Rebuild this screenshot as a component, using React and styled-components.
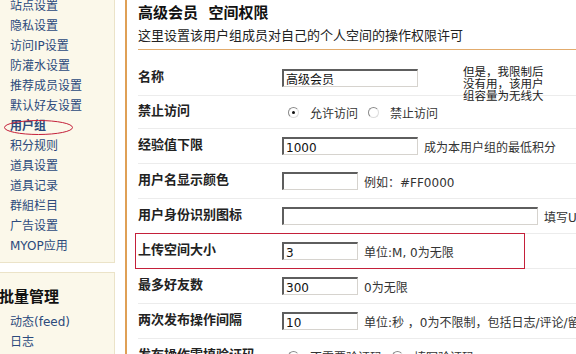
import styled, { createGlobalStyle } from "styled-components";

const GlobalStyle = createGlobalStyle`
  body {
    margin: 0;
    background: #fff;
    overflow: hidden;
  }
  * {
    box-sizing: border-box;
  }
`;

const Page = styled.div`
  display: flex;
  width: 576px;
  height: 354px;
  overflow: hidden;
  font-family: "DejaVu Sans", "Noto Sans CJK SC", sans-serif;
  font-size: 12px;
  color: #333;
`;

const Sidebar = styled.aside`
  flex: none;
  width: 125px;
  margin-left: -10px;
  margin-right: 10px;
  display: flex;
  flex-direction: column;
  gap: 9px;
`;

const MenuBox = styled.div`
  background: #fbf8ea;
  border: 1px solid #ebe3c8;
  margin-top: ${({ $top }) => $top || 0};
  padding: ${({ $pad }) => $pad};
`;

const MenuTitle = styled.h3`
  margin: 0 0 5px;
  padding-left: 8px;
  font-size: 15px;
  line-height: 20px;
  font-weight: bold;
  color: #111;
`;

const MenuList = styled.ul`
  list-style: none;
  margin: 0;
  padding: 0 0 0 19px;
`;

const MenuItem = styled.li`
  position: relative;
  line-height: 20px;
  height: 20px;
  color: #2c4a7c;
  font-weight: ${({ $active }) => ($active ? "bold" : "normal")};
  white-space: nowrap;
`;

const Ellipse = styled.svg`
  position: absolute;
  left: -6px;
  top: 4px;
  overflow: visible;
`;

const Main = styled.main`
  flex: none;
  width: 480px;
  border-left: 2px solid #dfa056;
  padding-left: 11px;
`;

const Header = styled.div`
  padding: 3px 0 5px;
  border-bottom: 1px solid #e2ab6c;
`;

const Title = styled.h2`
  margin: 0;
  font-size: 15px;
  line-height: 20px;
  font-weight: bold;
  color: #111;
  white-space: pre;
`;

const Subtitle = styled.p`
  margin: 5px 0 0;
  font-size: 13px;
  line-height: 16px;
  color: #222;
`;

const Form = styled.div`
  margin-top: 11px;
`;

const Row = styled.div`
  position: relative;
  display: grid;
  grid-template-columns: 144px auto;
  align-items: center;
  height: ${({ $h }) => $h || 35}px;
  border-bottom: 1px solid #ececec;
`;

const Label = styled.div`
  padding-bottom: 5px;
  font-size: 13px;
  font-weight: bold;
  color: #222;
  white-space: nowrap;
`;

const Field = styled.div`
  display: flex;
  align-items: center;
  gap: 6px;
  white-space: nowrap;
`;

const Input = styled.div`
  width: ${({ $w }) => $w}px;
  height: 18px;
  padding: 3px 0 0 2px;
  border-top: 2px solid #5e5e5e;
  border-left: 2px solid #5e5e5e;
  border-right: 1px solid #d6d3ce;
  border-bottom: 1px solid #d6d3ce;
  background: #fff;
  font-size: 12px;
  line-height: 13px;
  color: #111;
`;

const Hint = styled.span`
  font-size: 12px;
  color: #333;
`;

const Radios = styled.div`
  display: flex;
  align-items: center;
  gap: 10px;
  margin-left: 6px;
  white-space: nowrap;
`;

const RadioOption = styled.label`
  display: flex;
  align-items: center;
  gap: 11px;
  font-size: 12px;
  color: #333;
`;

const RadioDot = styled.span`
  position: relative;
  width: 11px;
  height: 11px;
  border-radius: 50%;
  border: 1px solid;
  border-color: #8a8a8a #dcdcdc #dcdcdc #8a8a8a;
  background: #fff;

  &::after {
    content: "";
    display: ${({ $checked }) => ($checked ? "block" : "none")};
    position: absolute;
    left: 3px;
    top: 3px;
    width: 3px;
    height: 3px;
    border-radius: 50%;
    background: #111;
  }
`;

const Note = styled.div`
  position: absolute;
  left: 325px;
  top: 4px;
  font-family: "Noto Sans CJK SC", sans-serif;
  font-size: 11.5px;
  line-height: 12px;
  color: #222;
`;

const Highlight = styled.div`
  position: absolute;
  left: -3px;
  top: -1px;
  width: 390px;
  height: 36px;
  border: 1px solid #c4203a;
  pointer-events: none;
`;

const menu = [
  "站点设置",
  "隐私设置",
  "访问IP设置",
  "防灌水设置",
  "推荐成员设置",
  "默认好友设置",
  "用户组",
  "积分规则",
  "道具设置",
  "道具记录",
  "群組栏目",
  "广告设置",
  "MYOP应用",
];

const Radio = ({ checked, children }) => (
  <RadioOption>
    <RadioDot $checked={checked} />
    {children}
  </RadioOption>
);

const App = () => (
  <>
    <GlobalStyle />
    <Page>
      <Sidebar>
        <MenuBox $top="-10px" $pad="5px 0 6px">
          <MenuList>
            {menu.map((item) => (
              <MenuItem key={item} $active={item === "用户组"}>
                {item}
                {item === "用户组" && (
                  <Ellipse width="69" height="15" viewBox="0 0 69 15">
                    <ellipse cx="34.5" cy="7.5" rx="34" ry="7" fill="none" stroke="#c4203a" strokeWidth="1" />
                  </Ellipse>
                )}
              </MenuItem>
            ))}
          </MenuList>
        </MenuBox>
        <MenuBox $pad="14px 0 10px">
          <MenuTitle>批量管理</MenuTitle>
          <MenuList>
            <MenuItem>动态(feed)</MenuItem>
            <MenuItem>日志</MenuItem>
          </MenuList>
        </MenuBox>
      </Sidebar>

      <Main>
        <Header>
          <Title>高级会员  空间权限</Title>
          <Subtitle>这里设置该用户组成员对自己的个人空间的操作权限许可</Subtitle>
        </Header>
        <Form>
          <Row>
            <Label>名称</Label>
            <Field>
              <Input $w={136}>高级会员</Input>
            </Field>
            <Note>
              但是，我限制后
              <br />
              没有用，该用户
              <br />
              组容量为无线大
            </Note>
          </Row>
          <Row $h={33}>
            <Label>禁止访问</Label>
            <Radios>
              <Radio checked>允许访问</Radio>
              <Radio>禁止访问</Radio>
            </Radios>
          </Row>
          <Row>
            <Label>经验值下限</Label>
            <Field>
              <Input $w={136}>1000</Input>
              <Hint>成为本用户组的最低积分</Hint>
            </Field>
          </Row>
          <Row>
            <Label>用户名显示颜色</Label>
            <Field>
              <Input $w={76} />
              <Hint>例如：#FF0000</Hint>
            </Field>
          </Row>
          <Row>
            <Label>用户身份识别图标</Label>
            <Field>
              <Input $w={256} />
              <Hint>填写URL地址</Hint>
            </Field>
          </Row>
          <Row>
            <Label>上传空间大小</Label>
            <Field>
              <Input $w={76}>3</Input>
              <Hint>单位:M, 0为无限</Hint>
            </Field>
            <Highlight />
          </Row>
          <Row>
            <Label>最多好友数</Label>
            <Field>
              <Input $w={76}>300</Input>
              <Hint>0为无限</Hint>
            </Field>
          </Row>
          <Row>
            <Label>两次发布操作间隔</Label>
            <Field>
              <Input $w={76}>10</Input>
              <Hint>单位:秒 ，0为不限制，包括日志/评论/留言</Hint>
            </Field>
          </Row>
          <Row>
            <Label>发布操作需填验证码</Label>
            <Radios>
              <Radio checked>不需要验证码</Radio>
              <Radio>填写验证码</Radio>
            </Radios>
          </Row>
        </Form>
      </Main>
    </Page>
  </>
);

export default App;
